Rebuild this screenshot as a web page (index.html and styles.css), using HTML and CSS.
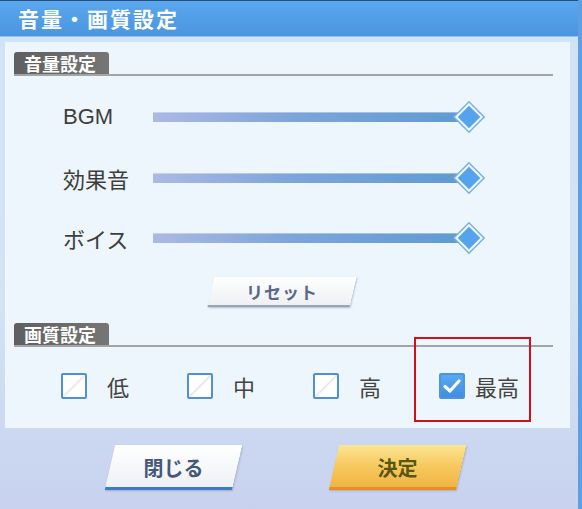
FILE: index.html
```html
<!DOCTYPE html>
<html lang="ja">
<head>
<meta charset="UTF-8">
<title>音量・画質設定</title>
<link rel="stylesheet" href="styles.css">
</head>
<body>

<div class="window">
  <div class="titlebar">音量・画質設定</div>

  <div class="panel">
    <div class="section-head"><span class="tab">音量設定</span></div>

    <div class="slider-row">
      <span class="label">BGM</span>
      <div class="slider"><div class="track"></div><span class="thumb"></span></div>
    </div>
    <div class="slider-row">
      <span class="label">効果音</span>
      <div class="slider"><div class="track"></div><span class="thumb"></span></div>
    </div>
    <div class="slider-row">
      <span class="label">ボイス</span>
      <div class="slider"><div class="track"></div><span class="thumb"></span></div>
    </div>

    <div class="reset-wrap">
      <button class="btn btn-reset">リセット</button>
    </div>

    <div class="section-head quality-head"><span class="tab">画質設定</span></div>

    <div class="options">
      <label class="option"><span class="box"></span><span class="opt-text">低</span></label>
      <label class="option"><span class="box"></span><span class="opt-text">中</span></label>
      <label class="option"><span class="box"></span><span class="opt-text">高</span></label>
      <label class="option selected">
        <span class="box checked">
          <svg width="22" height="22" viewBox="0 0 22 22"><path d="M4 11.5 L9 16 L18 6" fill="none" stroke="#fff" stroke-width="3.2" stroke-linecap="round" stroke-linejoin="round"/></svg>
        </span>
        <span class="opt-text">最高</span>
      </label>
      <div class="highlight"></div>
    </div>
  </div>

  <div class="footer">
    <button class="btn btn-close">閉じる</button>
    <button class="btn btn-ok">決定</button>
  </div>
</div>

</body>
</html>
```

FILE: styles.css
```css
* {
  box-sizing: border-box;
}
body {
  margin: 0;
  width: 582px;
  height: 509px;
  overflow: hidden;
  font-family: "Noto Sans CJK JP", "Noto Sans", sans-serif;
}
.window {
  width: 582px;
  height: 509px;
  background: linear-gradient(to bottom, #cfe4f6 0%, #d2e3f4 60%, #c8d2ef 100%);
  border-right: 4px solid #5d9fe0;
}
.titlebar {
  height: 37px;
  border-top: 1px solid #24507e;
  border-bottom: 1px solid #8cc3f2;
  background: linear-gradient(to bottom, #5aa7ef, #4b96de);
  color: #fff;
  font-size: 21px;
  font-weight: 700;
  line-height: 34px;
  padding-left: 18px;
  letter-spacing: 2px;
}
.panel {
  margin: 5px 8px 0 5px;
  height: 386px;
  background: #edf6fd;
  position: relative;
  padding-top: 10px;
}
.section-head {
  margin: 0 17px 0 9px;
  border-bottom: 2px solid #a2a4a8;
  height: 24px;
}
.tab {
  display: inline-block;
  width: 95px;
  height: 22px;
  background: linear-gradient(to right, #5f5f5f, #767676);
  border-radius: 3px 3px 0 0;
  color: #fff;
  font-size: 18px;
  font-weight: 700;
  line-height: 22px;
  padding-left: 10px;
}
/* sliders */
.slider-row {
  height: 60.5px;
  display: flex;
  align-items: center;
  padding-left: 58px;
}
.section-head + .slider-row {
  margin-top: 11px;
}
.label {
  width: 90px;
  font-family: "Liberation Sans", "Noto Sans CJK JP", sans-serif;
  font-size: 22px;
  color: #3e3e3e;
}
.slider {
  position: relative;
  width: 316px;
  height: 10px;
}
.track {
  width: 305px;
  height: 10px;
  background: linear-gradient(to right, #acb9e3, #7ea5da 45%, #5f9bd2);
  box-shadow: inset 0 1px 0 rgba(255,255,255,0.35);
}
.thumb {
  position: absolute;
  right: -10px;
  top: -5px;
  width: 20px;
  height: 20px;
  transform: rotate(45deg);
  background: #54a3ec;
  border: 2px solid #f4f9fe;
  box-shadow: 0 0 0 1.5px #78b2e6;
}
/* buttons */
.btn {
  position: relative;
  z-index: 0;
  border: none;
  background: none;
  font-family: inherit;
  font-weight: 700;
  padding: 0;
  cursor: pointer;
}
.btn::before {
  content: "";
  position: absolute;
  inset: 0;
  z-index: -1;
  transform: skewX(-13deg);
}
.reset-wrap {
  display: flex;
  justify-content: center;
  padding-right: 11px;
  margin-top: 8px;
}
.btn-reset {
  width: 142px;
  height: 30px;
  font-size: 17px;
  color: #5a6888;
  letter-spacing: 1px;
}
.btn-reset::before {
  background: linear-gradient(to bottom, #ffffff, #eef0f3);
  border-bottom: 2px solid #9aa4b8;
  box-shadow: 1px 1px 2px rgba(80,90,110,0.35);
}
.quality-head {
  margin-top: 16px;
}
/* quality options */
.options {
  display: flex;
  padding-left: 56px;
  margin-top: 23px;
}
.option {
  width: 126px;
  display: flex;
  align-items: center;
}
.box {
  width: 26px;
  height: 26px;
  border: 2px solid #4f90d6;
  border-radius: 2px;
  background: linear-gradient(135deg, #ffffff 45%, #e9e4ee 50%, #ffffff 56%);
  display: flex;
  align-items: center;
  justify-content: center;
}
.box.checked {
  border-color: #4a96e2;
  background: linear-gradient(to bottom, #5aa8f0, #3f8ee0);
}
.opt-text {
  margin-left: 20px;
  font-size: 22px;
  color: #444;
}
.selected .opt-text {
  margin-left: 10px;
}
.highlight {
  position: absolute;
  left: 409px;
  top: 295px;
  width: 117px;
  height: 85px;
  border: 2px solid #d0111d;
}
/* footer */
.footer {
  display: flex;
  padding-left: 110px;
  gap: 97px;
  margin-top: 17px;
}
.btn-close,
.btn-ok {
  width: 127px;
  height: 45px;
  font-size: 20px;
}
.btn-close {
  color: #46587a;
}
.btn-close::before {
  background: linear-gradient(to bottom, #ffffff, #eef1f5);
  border-bottom: 3px solid #3b7bc9;
  box-shadow: 1px 1px 2px rgba(60,80,120,0.3);
}
.btn-ok {
  color: #595512;
}
.btn-ok::before {
  background: linear-gradient(to bottom, #fde591, #f6c65a 55%, #f0b445);
  border-bottom: 3px solid #e58e2c;
  box-shadow: 1px 1px 2px rgba(120,80,20,0.3);
}
```
